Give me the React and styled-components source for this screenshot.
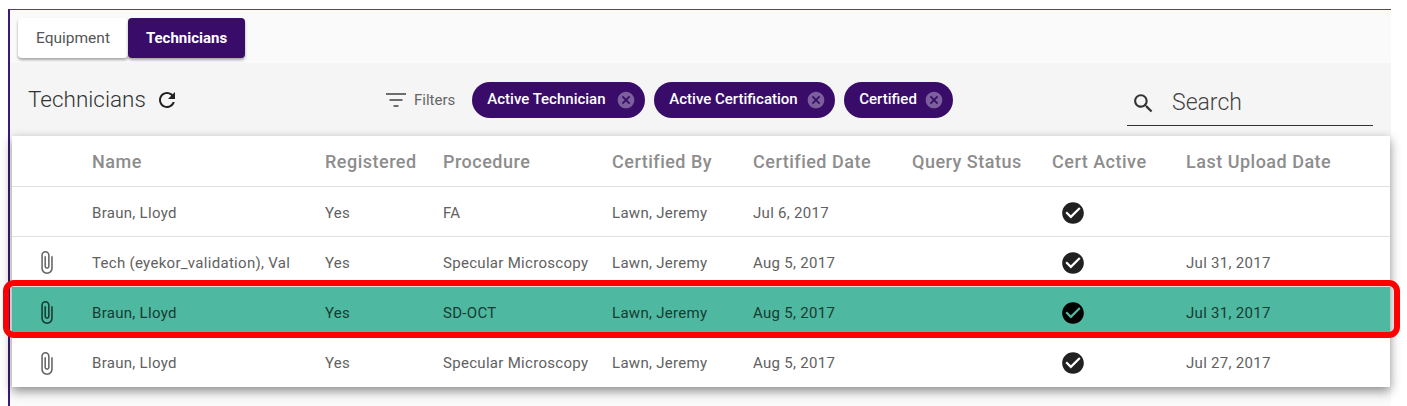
import styled, { createGlobalStyle } from "styled-components";

const GlobalStyle = createGlobalStyle`
  html, body {
    margin: 0;
    padding: 0;
    background: #fff;
    overflow: hidden;
  }
  body {
    font-family: Roboto, "Liberation Sans", sans-serif;
  }
`;

const paths = {
  clip: "M16.5 6v11.5c0 2.21-1.79 4-4 4s-4-1.79-4-4V5c0-1.38 1.12-2.5 2.5-2.5s2.5 1.12 2.5 2.5v10.5c0 .55-.45 1-1 1s-1-.45-1-1V6H10v9.5c0 1.38 1.12 2.5 2.5 2.5s2.5-1.12 2.5-2.5V5c0-2.21-1.79-4-4-4S7 2.79 7 5v12.5c0 3.04 2.46 5.5 5.5 5.5s5.5-2.46 5.5-5.5V6h-1.5z",
  check: "M12 2C6.48 2 2 6.48 2 12s4.48 10 10 10 10-4.48 10-10S17.52 2 12 2zm-2 15l-5-5 1.41-1.41L10 14.17l7.59-7.59L19 8l-9 9z",
  refresh: "M17.65 6.35C16.2 4.9 14.21 4 12 4c-4.42 0-7.99 3.58-7.99 8s3.57 8 7.99 8c3.73 0 6.84-2.55 7.73-6h-2.08c-.82 2.33-3.04 4-5.65 4-3.31 0-6-2.69-6-6s2.69-6 6-6c1.66 0 3.14.69 4.22 1.78L13 11h7V4l-2.35 2.35z",
  search: "M15.5 14h-.79l-.28-.27C15.41 12.59 16 11.11 16 9.5 16 5.91 13.09 3 9.5 3S3 5.91 3 9.5 5.91 16 9.5 16c1.61 0 3.09-.59 4.23-1.57l.27.28v.79l5 4.99L20.49 19l-4.99-5zm-6 0C7.01 14 5 11.99 5 9.5S7.01 5 9.5 5 14 7.01 14 9.5 11.99 14 9.5 14z",
  cancel: "M12 2C6.47 2 2 6.47 2 12s4.47 10 10 10 10-4.47 10-10S17.53 2 12 2zm5 13.59L15.59 17 12 13.41 8.41 17 7 15.59 10.59 12 7 8.41 8.41 7 12 10.59 15.59 7 17 8.41 13.41 12 17 15.59z",
};

const Icon = ({ name, size = 24, color = "currentColor", className }) => (
  <svg className={className} width={size} height={size} viewBox="0 0 24 24" fill={color}>
    <path d={paths[name]} />
  </svg>
);

const FilterIcon = () => (
  <svg width="22" height="16" viewBox="0 0 22 16" stroke="#333" strokeWidth="1.4">
    <line x1="1" y1="2" x2="21" y2="2" />
    <line x1="4.5" y1="8" x2="17.5" y2="8" />
    <line x1="8.5" y1="14" x2="13.5" y2="14" />
  </svg>
);

const Frame = styled.div`
  box-sizing: border-box;
  margin: 9px 0 0 8px;
  width: 1383px;
  height: 397px;
  background: #fafafa;
  border-top: 1px solid #5c3d8a;
  border-left: 2px solid #3a1a78;
  display: flex;
  flex-direction: column;
`;

const Tabs = styled.div`
  display: flex;
  height: 53px;
  padding: 8px 0 0 8px;
  box-sizing: border-box;
`;

const Tab = styled.div`
  height: 40px;
  width: ${(p) => p.$width}px;
  display: flex;
  align-items: center;
  justify-content: center;
  border-radius: 4px;
  font-size: ${(p) => (p.$active ? 15 : 15.5)}px;
  font-weight: ${(p) => (p.$active ? 700 : 400)};
  color: ${(p) => (p.$active ? "#fff" : "#555")};
  background: ${(p) => (p.$active ? "#380c68" : "#fff")};
  box-shadow: 0 2px 3px rgba(0, 0, 0, 0.35);
`;

const Toolbar = styled.div`
  height: 73px;
  background: #f5f5f5;
  display: flex;
  align-items: center;
  box-sizing: border-box;
  padding-left: 18px;
`;

const TitleGroup = styled.div`
  width: 357px;
  display: flex;
  align-items: center;
  gap: 9px;
`;

const Title = styled.div`
  font-size: 22.5px;
  font-weight: 300;
  color: #333;
  margin-top: -2px;
`;

const FilterGroup = styled.div`
  display: flex;
  align-items: center;
`;

const FilterLabel = styled.span`
  font-size: 15px;
  color: #666;
  margin: 0 17px 0 7px;
`;

const Chips = styled.div`
  display: flex;
  gap: 9px;
`;

const Chip = styled.div`
  width: ${(p) => p.$width}px;
  height: 36px;
  box-sizing: border-box;
  padding: 0 9px 0 15px;
  border-radius: 18px;
  background: #380c68;
  color: #fff;
  font-size: 15px;
  font-weight: 500;
  display: flex;
  align-items: center;
  justify-content: space-between;
  span {
    margin-top: -2px;
  }
`;

const Search = styled.div`
  margin-left: auto;
  margin-right: 18px;
  margin-top: 6px;
  width: 246px;
  height: 46px;
  box-sizing: border-box;
  border-bottom: 1.5px solid #333;
  display: flex;
  align-items: center;
  padding-left: 4px;
  gap: 16px;
  font-size: 23px;
  font-weight: 300;
  color: #444;
  svg {
    margin-top: 3px;
  }
`;

const Table = styled.div`
  margin: 0 1px 0 2px;
  background: #fff;
  box-shadow: 0 4px 10px rgba(0, 0, 0, 0.45);
`;

const columns = "80px 233px 118px 169px 141px 159px 140px 134px 1fr";

const HeaderRow = styled.div`
  display: grid;
  grid-template-columns: ${columns};
  align-items: center;
  height: 51px;
  box-sizing: border-box;
  border-bottom: 1px solid #e0e0e0;
  font-size: 18px;
  font-weight: 500;
  color: #8d8d8d;
  letter-spacing: 0.5px;
`;

const Row = styled.div`
  position: relative;
  display: grid;
  grid-template-columns: ${columns};
  align-items: center;
  height: 50px;
  box-sizing: border-box;
  padding-top: 2px;
  border-bottom: ${(p) => (p.$last ? "none" : "1px solid #e0e0e0")};
  font-size: 15px;
  letter-spacing: 0.3px;
  color: ${(p) => (p.$selected ? "#173b32" : "#616161")};
  background: ${(p) => (p.$selected ? "#4fb8a0" : "#fff")};
`;

const Highlight = styled.div`
  position: absolute;
  z-index: 1;
  left: -9px;
  right: -10px;
  top: -7px;
  bottom: -2px;
  border: 6px solid #fe0000;
  border-radius: 11px;
  pointer-events: none;
`;

const IconCell = styled.div`
  display: flex;
  padding-left: ${(p) => p.$pad}px;
`;

const rows = [
  { name: "Braun, Lloyd", proc: "FA", date: "Jul 6, 2017", upload: "" },
  { name: "Tech (eyekor_validation), Val", proc: "Specular Microscopy", date: "Aug 5, 2017", upload: "Jul 31, 2017", clip: true },
  { name: "Braun, Lloyd", proc: "SD-OCT", date: "Aug 5, 2017", upload: "Jul 31, 2017", clip: true, selected: true },
  { name: "Braun, Lloyd", proc: "Specular Microscopy", date: "Aug 5, 2017", upload: "Jul 27, 2017", clip: true },
];

const headers = ["", "Name", "Registered", "Procedure", "Certified By", "Certified Date", "Query Status", "Cert Active", "Last Upload Date"];

const chips = [
  { label: "Active Technician", width: 173 },
  { label: "Active Certification", width: 181 },
  { label: "Certified", width: 109 },
];

export default function App() {
  return (
    <>
      <GlobalStyle />
      <Frame>
        <Tabs>
          <Tab $width={110}>Equipment</Tab>
          <Tab $width={117} $active>Technicians</Tab>
        </Tabs>
        <Toolbar>
          <TitleGroup>
            <Title>Technicians</Title>
            <Icon name="refresh" size={24} color="#222" />
          </TitleGroup>
          <FilterGroup>
            <FilterIcon />
            <FilterLabel>Filters</FilterLabel>
            <Chips>
              {chips.map((c) => (
                <Chip key={c.label} $width={c.width}>
                  <span>{c.label}</span>
                  <Icon name="cancel" size={20} color="#7c5f9c" />
                </Chip>
              ))}
            </Chips>
          </FilterGroup>
          <Search>
            <Icon name="search" size={25} color="#333" />
            Search
          </Search>
        </Toolbar>
        <Table>
          <HeaderRow>
            {headers.map((h, i) => (
              <div key={i}>{h}</div>
            ))}
          </HeaderRow>
          {rows.map((r, i) => (
            <Row key={i} $selected={r.selected} $last={i === rows.length - 1}>
              <IconCell $pad={22}>
                {r.clip && <Icon name="clip" size={25} color={r.selected ? "#173b32" : "#666"} />}
              </IconCell>
              <div>{r.name}</div>
              <div>Yes</div>
              <div>{r.proc}</div>
              <div>Lawn, Jeremy</div>
              <div>{r.date}</div>
              <div />
              <IconCell $pad={8}>
                <Icon name="check" size={26} color={r.selected ? "#000" : "#212121"} />
              </IconCell>
              <div>{r.upload}</div>
              {r.selected && <Highlight />}
            </Row>
          ))}
        </Table>
      </Frame>
    </>
  );
}
